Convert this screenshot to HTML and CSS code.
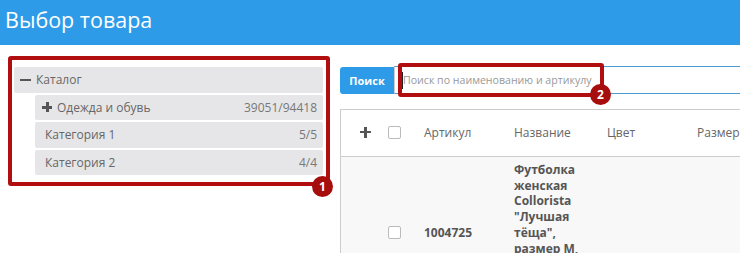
FILE: index.html
```html
<!DOCTYPE html>
<html lang="ru">
<head>
<meta charset="utf-8">
<title>Выбор товара</title>
<link rel="stylesheet" href="styles.css">
</head>
<body>
<header class="topbar">
  <h1 class="title">Выбор товара</h1>
</header>
<main class="layout">
  <section class="sidebar">
    <div class="tree">
      <div class="node node-root">
        <span class="toggle minus"></span>
        <span class="label">Каталог</span>
      </div>
      <div class="children">
        <div class="node">
          <span class="toggle plus"></span>
          <span class="label">Одежда и обувь</span>
          <span class="count">39051/94418</span>
        </div>
        <div class="node node-leaf">
          <span class="label">Категория 1</span>
          <span class="count">5/5</span>
        </div>
        <div class="node node-leaf">
          <span class="label">Категория 2</span>
          <span class="count">4/4</span>
        </div>
      </div>
    </div>
    <div class="mark mark-1"><span class="badge">1</span></div>
  </section>
  <section class="content">
    <div class="search">
      <button class="search-btn" type="button">Поиск</button>
      <div class="search-input">
        <span class="caret"></span>
        <span class="placeholder">Поиск по наименованию и артикулу</span>
      </div>
      <div class="mark mark-2"><span class="badge">2</span></div>
    </div>
    <div class="grid">
      <div class="row row-head">
        <div class="cell c-plus"><span class="plus-icon"></span></div>
        <div class="cell c-check"><span class="checkbox"></span></div>
        <div class="cell c-art">Артикул</div>
        <div class="cell c-name">Название</div>
        <div class="cell c-color">Цвет</div>
        <div class="cell c-size">Размер</div>
      </div>
      <div class="row row-body">
        <div class="cell c-plus"></div>
        <div class="cell c-check"><span class="checkbox"></span></div>
        <div class="cell c-art strong">1004725</div>
        <div class="cell c-name strong">Футболка<br>женская<br>Collorista<br>"Лучшая<br>тёща",<br>размер M,<br>цвет<br>белый,<br>хлопок</div>
        <div class="cell c-color"></div>
        <div class="cell c-size"></div>
      </div>
    </div>
  </section>
</main>
</body>
</html>
```

FILE: styles.css
```css
* { box-sizing: border-box; }

html, body {
  margin: 0;
  padding: 0;
  background: #fff;
  font-family: "Open Sans", "Noto Sans", sans-serif;
  overflow: hidden;
  width: 740px;
  height: 253px;
}

.topbar {
  height: 45px;
  background: #2e9be8;
  display: flex;
  align-items: center;
  padding-left: 5px;
}

.title {
  margin: 0;
  color: #fff;
  font-weight: 400;
  font-size: 21.5px;
  line-height: 1;
  position: relative;
  top: -3px;
}

.layout {
  display: flex;
}

.sidebar {
  position: relative;
  width: 340px;
  flex: none;
  padding: 22px 17px 0 14px;
}

.tree {
  width: 309px;
  font-size: 12px;
  color: #666;
}

.node {
  display: flex;
  align-items: center;
  height: 25.5px;
  background: #e6e6e8;
  border-radius: 2px;
  padding: 0 6px 0 7px;
  margin-bottom: 2px;
}

.node-root {
  padding-left: 6px;
}

.children {
  padding-left: 21px;
}

.node-leaf {
  padding-left: 10px;
}

.label {
  flex: 1;
  white-space: nowrap;
}

.count {
  color: #777;
}

.toggle {
  position: relative;
  width: 10px;
  height: 10px;
  margin-right: 5px;
  flex: none;
}

.toggle::before,
.plus::after {
  content: "";
  position: absolute;
  background: #555;
}

.toggle::before {
  left: 0;
  top: 4px;
  width: 10px;
  height: 2.5px;
}

.plus::after {
  left: 4px;
  top: 0;
  width: 2.5px;
  height: 10px;
}

.node-root .toggle { width: 11px; }
.node-root .toggle::before { width: 11px; }

.mark {
  position: absolute;
  border: 4px solid #b10f0f;
  border-radius: 3px;
  pointer-events: none;
}

.mark-1 {
  left: 8px;
  top: 11px;
  width: 322px;
  height: 130px;
}

.badge {
  position: absolute;
  width: 21px;
  height: 21px;
  border-radius: 50%;
  background: #a60d0d;
  color: #fff;
  font-family: "Open Sans", sans-serif;
  font-weight: 700;
  font-size: 12px;
  line-height: 21px;
  text-align: center;
}

.mark-1 .badge {
  right: -7px;
  bottom: -15px;
}

.content {
  flex: 1;
  min-width: 0;
  padding-top: 21px;
}

.search {
  position: relative;
  display: flex;
  height: 28px;
}

.search-btn {
  width: 54px;
  height: 27px;
  margin-top: 1px;
  flex: none;
  border: 0;
  border-radius: 3px 0 0 3px;
  background: #2e9be8;
  color: #fff;
  font-family: "Open Sans", sans-serif;
  font-weight: 700;
  font-size: 11px;
  padding: 0;
  text-align: center;
}

.search-input {
  flex: 1;
  display: flex;
  align-items: center;
  height: 28px;
  border-top: 1px solid #4b9cd3;
  border-bottom: 1px solid #4b9cd3;
  border-left: 1px solid #cfcfcf;
  padding-left: 7px;
  font-size: 10.6px;
  color: #999;
  white-space: nowrap;
}

.caret {
  width: 1px;
  height: 17px;
  background: #222;
  flex: none;
}

.mark-2 {
  left: 58px;
  top: -3px;
  width: 206px;
  height: 34px;
}

.mark-2 .badge {
  right: -11px;
  bottom: -12px;
}

.grid {
  margin-top: 15px;
  width: 440px;
  border-left: 1px solid #ccc;
  border-top: 1px solid #ccc;
}

.row {
  display: grid;
  grid-template-columns: 47px 36px 90px 93px 90px 1fr;
  align-items: center;
}

.row-head {
  height: 47px;
  border-bottom: 1px solid #ccc;
  font-size: 12px;
  color: #666;
  padding-bottom: 2px;
}

.row-body {
  background: #f8f8f8;
  padding-top: 5px;
  font-size: 12px;
  line-height: 15.7px;
  color: #555;
}

.cell {
  white-space: nowrap;
}

.c-plus {
  padding-left: 19px;
  display: flex;
  align-items: center;
}

.plus-icon {
  position: relative;
  width: 11px;
  height: 11px;
}

.plus-icon::before,
.plus-icon::after {
  content: "";
  position: absolute;
  background: #555;
}

.plus-icon::before {
  left: 0;
  top: 4px;
  width: 11px;
  height: 2.5px;
}

.plus-icon::after {
  left: 4.3px;
  top: 0;
  width: 2.5px;
  height: 11px;
}

.c-check {
  display: flex;
  align-items: center;
}

.checkbox {
  width: 13px;
  height: 13px;
  border: 1px solid #bbb;
  border-radius: 2px;
  background: #fff;
}

.strong {
  font-weight: 700;
}

.c-name.strong {
  white-space: normal;
}
```
